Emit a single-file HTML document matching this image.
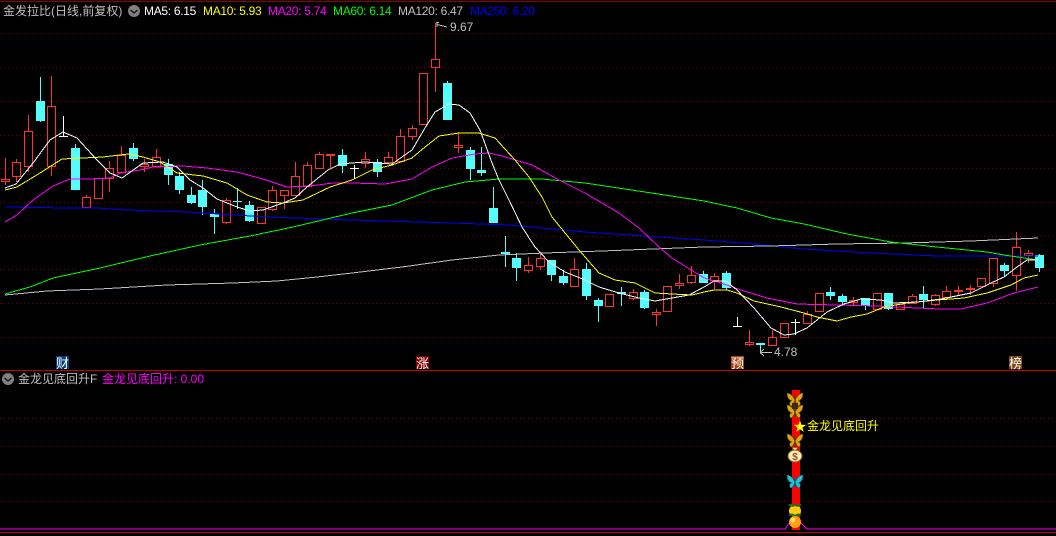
<!DOCTYPE html>
<html><head><meta charset="utf-8">
<style>
html,body{margin:0;padding:0;background:#000;}
#p{position:relative;width:1056px;height:536px;background:#000;overflow:hidden;font-family:"Liberation Sans","WenQuanYi Zen Hei","Noto Sans CJK SC",sans-serif;}
svg{position:absolute;left:0;top:0;}
.t{position:absolute;white-space:nowrap;font-size:12px;line-height:14px;letter-spacing:-.3px;}
.c{font-size:12px;letter-spacing:0;}
.b{position:absolute;width:13px;height:13px;top:356px;color:#fff;font:13px/13px "WenQuanYi Zen Hei","Noto Sans CJK SC",sans-serif;text-align:center;}
</style></head><body><div id="p">
<svg width="1056" height="536" viewBox="0 0 1056 536">
<defs>
<g id="bf">
<path d="M0 0C-2 -4 -5 -7 -8 -7C-8 -3 -7 0 -3 1C-6 1 -6 5 -4 6C-2 6 -1 3 0 0C1 3 2 6 4 6C6 5 6 1 3 1C7 0 8 -3 8 -7C5 -7 2 -4 0 0Z"/>
<path d="M0 -5V5" stroke-width="1.200"/>
</g>
</defs>
<g shape-rendering="crispEdges" fill="none">
<path d="M0 1.500H1056" stroke="#900000"/>
<path d="M0 370.500H1056" stroke="#c80000"/>
<path d="M0 532.500H1056" stroke="#c80000"/>
<path d="M0 33.500H1056M0 67.500H1056M0 101.500H1056M0 135.500H1056M0 168.500H1056M0 202.500H1056M0 236.500H1056M0 269.500H1056M0 303.500H1056M0 337.500H1056M0 418.500H1056M0 446.500H1056M0 474.500H1056M0 501.500H1056" stroke="#800000" stroke-dasharray="1 3"/>
<path stroke="#ff3232" d="M5.5 158V179M5.5 182V185M16.5 159V162M16.5 177V182M28.5 115V131M28.5 167V172M51.5 76V106M51.5 167V176M86.5 195V197M109.5 161V168M109.5 179V192M121.5 146V155M144.5 159V164M144.5 167V172M156.5 149V157M226.5 198V200M226.5 223V224M272.5 186V190M272.5 210V211M284.5 196V209M295.5 162V176M307.5 162V165M319.5 152V154M330.5 156V168M365.5 152V159M365.5 164V168M388.5 152V157M400.5 129V136M412.5 125V128M412.5 137V140M435.5 23V59M435.5 68V92M458.5 132V145M458.5 148V153M528.5 257V265M528.5 271V273M540.5 254V258M540.5 267V270M574.5 258V269M633.5 289V292M633.5 299V300M656.5 309V312M656.5 315V326M679.5 274V283M679.5 286V289M691.5 266V275M691.5 283V284M714.5 273V276M714.5 281V289M749.5 330V342M749.5 345V346M772.5 330V337M807.5 311V314M853.5 297V300M853.5 303V305M912.5 294V296M935.5 294V295M935.5 305V306M946.5 286V291M946.5 298V299M958.5 286V290M958.5 292V295M970.5 285V288M970.5 290V295M993.5 284V287M1016.5 232V247M1016.5 276V291M1028.5 250V253M1028.5 256V263"/>
<path stroke="#ff3232" d="M1.5 179.5h8v2h-8zM12.5 162.5h8v14h-8zM24.5 131.5h8v35h-8zM47.5 106.5h8v60h-8zM82.5 197.5h8v10h-8zM94.5 178.5h8v20h-8zM105.5 168.5h8v10h-8zM117.5 155.5h8v17h-8zM140.5 164.5h8v2h-8zM152.5 157.5h8v9h-8zM222.5 200.5h8v22h-8zM257.5 207.5h8v16h-8zM268.5 190.5h8v19h-8zM280.5 190.5h8v5h-8zM291.5 176.5h8v19h-8zM303.5 165.5h8v21h-8zM315.5 154.5h8v14h-8zM326.5 154.5h8v1h-8zM361.5 159.5h8v4h-8zM384.5 157.5h8v5h-8zM396.5 136.5h8v25h-8zM408.5 128.5h8v8h-8zM419.5 73.5h8v51h-8zM431.5 59.5h8v8h-8zM454.5 145.5h8v2h-8zM524.5 265.5h8v5h-8zM536.5 258.5h8v8h-8zM570.5 269.5h8v17h-8zM605.5 294.5h8v12h-8zM629.5 292.5h8v6h-8zM652.5 312.5h8v2h-8zM663.5 286.5h8v25h-8zM675.5 283.5h8v2h-8zM687.5 275.5h8v7h-8zM710.5 276.5h8v4h-8zM745.5 342.5h8v2h-8zM768.5 337.5h8v8h-8zM780.5 323.5h8v14h-8zM803.5 314.5h8v9h-8zM815.5 293.5h8v18h-8zM849.5 300.5h8v2h-8zM873.5 293.5h8v16h-8zM896.5 304.5h8v5h-8zM908.5 296.5h8v7h-8zM931.5 295.5h8v9h-8zM942.5 291.5h8v6h-8zM954.5 290.5h8v1h-8zM966.5 288.5h8v1h-8zM977.5 278.5h8v8h-8zM989.5 258.5h8v25h-8zM1012.5 247.5h8v28h-8zM1024.5 253.5h8v2h-8z"/>
<path stroke="#54fcfc" d="M40.5 77V122M75.5 144V190M133.5 143V161M168.5 159V185M179.5 172V194M191.5 187V204M202.5 180V215M214.5 209V234M237.5 188V209M249.5 201V222M342.5 149V173M377.5 159V177M447.5 81V120M470.5 147V180M481.5 147V176M493.5 187V223M505.5 236V267M516.5 253V281M551.5 260V281M563.5 270V285M586.5 263V300M598.5 298V322M621.5 287V306M644.5 290V309M703.5 271V283M726.5 271V290M760.5 343V353M830.5 287V300M842.5 294V305M865.5 298V310M888.5 293V310M923.5 286V308M1004.5 263V276M1039.5 254V272"/>
<path fill="#54fcfc" d="M36 101h9v20h-9zM71 148h9v42h-9zM129 148h9v11h-9zM164 164h9v11h-9zM175 176h9v14h-9zM187 195h9v8h-9zM198 190h9v17h-9zM210 214h9v3h-9zM233 201h9v1h-9zM245 205h9v16h-9zM338 155h9v11h-9zM373 162h9v10h-9zM443 83h9v37h-9zM466 150h9v19h-9zM477 170h9v3h-9zM489 208h9v15h-9zM501 252h9v2h-9zM512 258h9v10h-9zM547 260h9v15h-9zM559 276h9v7h-9zM582 269h9v27h-9zM594 300h9v6h-9zM617 292h9v2h-9zM640 292h9v16h-9zM699 274h9v9h-9zM722 273h9v15h-9zM756 343h9v2h-9zM826 292h9v4h-9zM838 296h9v6h-9zM861 298h9v8h-9zM884 293h9v16h-9zM919 294h9v6h-9zM1000 265h9v6h-9zM1035 255h9v13h-9z"/>
<path stroke="#ffffff" d="M63.5 116V136M59 136.5H68M354.5 165V179M350 168.5H359M737.5 317V326M733 326.5H742M795.5 319V335M791 322.5H800"/>
<polyline stroke="#0000ff" points="5,207 67,208 97,208 127,210 187,212 267,217 352,220 452,223 509,225 585,232 704,240 754,244 804,249 871,253 937,256 1034,256 1038,256"/>
<polyline stroke="#c0c0c0" points="5,295 47,291 100,289 167,285 233,283 277,281 317,277 352,273 402,267 452,260 499,255 545,253 602,251 704,247 771,246 837,244 904,243 971,241 1038,238"/>
<polyline stroke="#00ff00" points="5,294 30,287 53,278 100,268 150,256 200,245 250,236 293,227 352,213 392,205 432,190 465,182 499,179 542,179 585,183 645,192 704,201 737,208 771,218 804,224 847,234 891,242 937,247 987,252 1004,255 1038,260"/>
<polyline stroke="#ff00ff" points="5,222 17,215 33,200 53,186 70,179 90,179 110,178 120,173 140,170 153,167 183,166 207,168 237,172 263,179 287,187 310,186 333,183 352,183 385,184 412,179 432,167 452,158 475,154 489,153 502,156 532,165 559,180 585,193 619,213 639,228 659,247 672,258 704,278 721,283 741,290 767,298 797,304 837,305 877,306 917,308 941,309 961,309 987,303 1014,293 1038,287"/>
<polyline stroke="#ffff00" points="5,190 17,187 40,173 62,159 83,158 103,157 128,154 143,157 160,162 177,173 203,176 227,183 247,195 267,202 283,203 303,200 330,187 352,180 372,170 392,165 412,158 425,147 439,136 459,133 479,133 495,138 515,160 529,177 542,197 552,217 579,250 599,273 615,280 635,283 655,293 672,294 692,295 704,292 714,290 727,290 737,293 754,301 781,307 804,313 817,317 837,321 851,317 867,314 884,307 907,303 937,300 964,298 987,293 1011,285 1024,278 1038,275"/>
<polyline stroke="#ffffff" points="5,188 16,184 33,163 50,140 63,132 77,138 97,160 110,173 122,178 143,163 163,162 177,167 190,180 203,188 217,199 237,207 250,211 263,210 283,203 295,198 307,187 328,170 340,164 352,163 365,162 392,164 412,150 425,128 435,112 449,104 459,105 470,113 480,130 492,163 499,180 509,200 522,227 535,247 549,262 565,272 585,280 599,287 619,293 639,298 655,301 672,298 689,295 704,287 714,281 726,281 737,290 754,308 771,328 784,335 794,334 807,328 827,312 844,304 861,299 881,300 894,303 917,302 941,299 971,293 991,283 1004,277 1017,267 1027,260 1038,260"/>
<path stroke="#c0c0c0" d="M436 22.5H439M437 24.5L447 27M437 22V27M761 352.5H772M760 352.5L764 349M760 352.5L764 356"/>
<rect x="792" y="390" width="8" height="140" fill="#ff0000"/>
<polyline stroke="#ff00ff" points="0,529 785,529 790,522 800,522 807,529 1056,529"/>
</g>
<circle cx="134" cy="11" r="6" fill="#808080"/>
<path d="M130.5 10L134 13L137.5 10" stroke="#111" stroke-width="1.300" fill="none"/>
<circle cx="8" cy="379" r="6" fill="#808080"/>
<path d="M4.5 378L8 381L11.500 378" stroke="#111" stroke-width="1.300" fill="none"/>
<g fill="#d9a416" stroke="#5a3c08" stroke-width=".6">
<use href="#bf" x="795" y="400"/>
<use href="#bf" x="795" y="412"/>
<use href="#bf" x="795" y="441"/>
</g>
<path d="M792 403H798V409H792Z" fill="#3a2a10"/>
<path d="M800 420.500L801.500 424.900H806.200L802.400 427.600L803.900 432L800 429.300L796.100 432L797.600 427.600L793.800 424.900H798.500Z" fill="#ffff00"/>
<path d="M792.500 447.500H797.500L796.500 450H793.500Z" fill="#fbeeb0" stroke="#7a5a28" stroke-width=".7"/>
<ellipse cx="795" cy="456" rx="7" ry="6" fill="#fbeeb0" stroke="#7a5a28"/>
<text x="795" y="460" text-anchor="middle" font-family="Liberation Sans" font-size="10" font-weight="bold" fill="#a04a30">$</text>
<g fill="#20c4d8" stroke="#0a5a70" stroke-width=".6"><use href="#bf" x="795" y="482"/></g>
<circle cx="795" cy="511" r="6" fill="#ffcc10"/>
<path d="M788 505Q792 502 795 505Q798 502 802 505Q798 508 795 506Q792 508 788 505Z" fill="#2a6a18"/>
<circle cx="795" cy="522" r="6" fill="#ffa010"/>
<circle cx="793" cy="520" r="2.500" fill="#ffe060"/>
<path d="M788 515Q792 512 795 515Q798 512 802 515Q798 517 795 516Q792 517 788 515Z" fill="#2a6a18"/>
</svg>
<div class="t c" style="left:3px;top:4px;color:#c0c0c0;">金发拉比(日线,前复权)</div>
<div class="t" style="left:144px;top:4px;color:#fff;">MA5: 6.15</div>
<div class="t" style="left:203px;top:4px;color:#ff0;">MA10: 5.93</div>
<div class="t" style="left:268px;top:4px;color:#f0f;">MA20: 5.74</div>
<div class="t" style="left:333px;top:4px;color:#0f0;">MA60: 6.14</div>
<div class="t" style="left:398px;top:4px;color:#c0c0c0;">MA120: 6.47</div>
<div class="t" style="left:470px;top:4px;color:#0000ff;">MA250: 6.20</div>
<div class="t" style="left:450px;top:20px;color:#c0c0c0;letter-spacing:0;">9.67</div>
<div class="t" style="left:774px;top:345px;color:#c0c0c0;letter-spacing:0;">4.78</div>
<div class="b" style="left:56px;background:#0a3c78;">财</div>
<div class="b" style="left:416px;background:#800000;">涨</div>
<div class="b" style="left:731px;background:#a8420f;">预</div>
<div class="b" style="left:1009px;background:#7c4210;">榜</div>
<div class="t c" style="left:18px;top:372px;color:#c0c0c0;">金龙见底回升F</div>
<div class="t c" style="left:102px;top:372px;color:#f0f;">金龙见底回升: 0.00</div>
<div class="t c" style="left:807px;top:419px;color:#ff0;">金龙见底回升</div>
</div></body></html>
